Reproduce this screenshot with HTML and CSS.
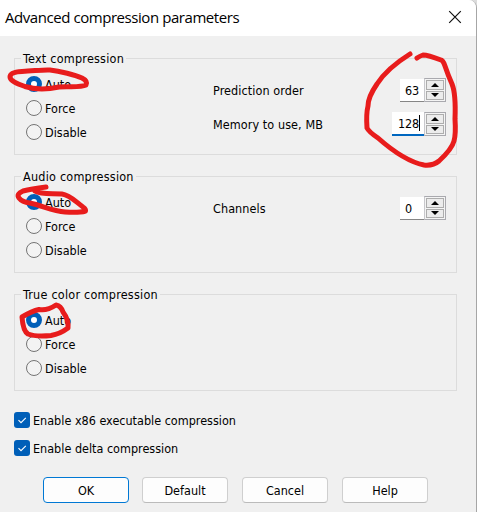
FILE: index.html
```html
<!DOCTYPE html>
<html lang="en">
<head>
<meta charset="utf-8">
<title>Advanced compression parameters</title>
<link rel="stylesheet" href="styles.css">
</head>
<body>
<main class="dialog">
  <header class="titlebar">
    <h1>Advanced compression parameters</h1>
    <svg class="close" width="14" height="14" viewBox="0 0 14 14"><path d="M1.2 1.2 12.8 12.8M12.8 1.2 1.2 12.8"/></svg>
  </header>
  <div class="content">
    <fieldset class="group">
      <legend>Text compression</legend>
      <div class="columns">
        <div class="radios">
          <div class="radio"><i class="dot on"></i><span>Auto</span></div>
          <div class="radio"><i class="dot"></i><span>Force</span></div>
          <div class="radio"><i class="dot"></i><span>Disable</span></div>
        </div>
        <div class="fields">
          <div class="field"><span>Prediction order</span>
            <div class="spin"><span class="value">63</span><span class="arrows"><b><svg width="8" height="4"><path d="M0 4 4 0 8 4z"/></svg></b><b><svg width="8" height="4"><path d="M0 0 4 4 8 0z"/></svg></b></span></div></div>
          <div class="field"><span>Memory to use, MB</span>
            <div class="spin"><span class="value focus">128<i class="caret"></i></span><span class="arrows"><b><svg width="8" height="4"><path d="M0 4 4 0 8 4z"/></svg></b><b><svg width="8" height="4"><path d="M0 0 4 4 8 0z"/></svg></b></span></div></div>
        </div>
      </div>
    </fieldset>
    <fieldset class="group">
      <legend>Audio compression</legend>
      <div class="columns">
        <div class="radios">
          <div class="radio"><i class="dot on"></i><span>Auto</span></div>
          <div class="radio"><i class="dot"></i><span>Force</span></div>
          <div class="radio"><i class="dot"></i><span>Disable</span></div>
        </div>
        <div class="fields">
          <div class="field"><span>Channels</span>
            <div class="spin"><span class="value">0</span><span class="arrows"><b><svg width="8" height="4"><path d="M0 4 4 0 8 4z"/></svg></b><b><svg width="8" height="4"><path d="M0 0 4 4 8 0z"/></svg></b></span></div></div>
        </div>
      </div>
    </fieldset>
    <fieldset class="group">
      <legend>True color compression</legend>
      <div class="columns">
        <div class="radios">
          <div class="radio"><i class="dot on"></i><span>Auto</span></div>
          <div class="radio"><i class="dot"></i><span>Force</span></div>
          <div class="radio"><i class="dot"></i><span>Disable</span></div>
        </div>
      </div>
    </fieldset>
    <div class="checks">
      <div class="check"><svg width="16" height="16"><rect width="16" height="16" rx="3"/><path d="M4.5 8.2 7 10.7 11.8 5.8"/></svg><span>Enable x86 executable compression</span></div>
      <div class="check"><svg width="16" height="16"><rect width="16" height="16" rx="3"/><path d="M4.5 8.2 7 10.7 11.8 5.8"/></svg><span>Enable delta compression</span></div>
    </div>
    <footer class="buttons">
      <button class="primary">OK</button><button>Default</button><button>Cancel</button><button>Help</button>
    </footer>
  </div>
  <svg class="ink" width="477" height="512" viewBox="0 0 477 512">
    <path d="M25 86.500C18 84 10 81 10 77Q10 72 22 71.500C34 71 43 69.500 50 70C60 71 75 75 82 78Q88 81 86 85C80 88 67 86 59 87C50 89 36 90 25 86.500Z"/>
    <path d="M46 187Q31 189 23 191Q16 194 19 198Q22 202 30 203C43 206 53 211 65 212Q79 213 85.500 211Q86 209 83 207C76 202 70 195 62 194C53 193 42 195 35 191"/>
    <path d="M22 317Q32 311 39 309.500Q47 311 56 305Q61 306 63 312Q69 320 68 328Q60 334 51 335.500Q36 337 28 334Q23 331 22 317Z"/>
    <path d="M410 54C394 64 384 73 377 84Q368 97 368 106Q366 114 367 128Q369 132 378 138Q404 161 424 165Q433 166 439 161Q452 149 454 141Q456 134 455 119Q456 94 452 84Q448 75 445 66Q443 60 441 60Q428 55 423 55Q420 56 417 58"/>
  </svg>
</main>
</body>
</html>
```
FILE: styles.css
```css
* { box-sizing: border-box; }
body {
  margin: 0;
  background: #dcdcdc;
  color: #000;
  font: 12.5px/16px "DejaVu Sans Condensed", "DejaVu Sans", sans-serif;
  font-stretch: condensed;
}
.dialog {
  position: relative;
  width: 477px;
  height: 512px;
  overflow: hidden;
  background: #f0f0f0;
  border-right: 1px solid #a6a6a6;
  border-top-right-radius: 8px;
}
.titlebar {
  display: flex;
  justify-content: space-between;
  height: 36px;
  padding: 10px 14px 0 5px;
  background: #fff;
}
h1 {
  margin: -3px 0 0;
  font: 400 15px/20px "Open Sans", "Noto Sans", sans-serif;
  letter-spacing: -0.44px;
}
.close { fill: none; stroke: #111; stroke-width: 1.2; }
.content { padding: 14px 19px 0 14px; }
.group {
  height: 105px;
  min-width: 0;
  margin: 0 0 13px;
  padding: 0;
  border: 1px solid #dcdcdc;
}
legend {
  height: 17px;
  margin-left: 6px;
  padding: 0 2px;
  line-height: 18px;
  letter-spacing: 0.23px;
}
.columns { display: grid; grid-template-columns: 187px 1fr; padding: 5px 10px 0 11px; }
.fields { padding-top: 1px; }
.radio { display: flex; align-items: center; gap: 3px; height: 24px; }
.dot { width: 16px; height: 16px; border: 1px solid #747474; border-radius: 50%; background: #f3f3f3; }
.dot.on { border: 5px solid #005fb8; background: #fff; }
.field { display: flex; align-items: center; justify-content: space-between; height: 34px; }
.field > span { padding-top: 2px; letter-spacing: 0.08px; }
.radio span { padding-top: 1px; }
.spin { display: flex; align-items: center; height: 24px; }
.value {
  width: 24px;
  height: 23px;
  padding: 0 5px;
  background: #fff;
  border-bottom: 1px solid #868686;
  line-height: 23px;
  letter-spacing: -0.2px;
}
.value.focus { display: flex; width: 32px; height: 24px; padding-left: 6px; border-bottom: 2px solid #0067c0; line-height: 24px; }
.caret { width: 1px; height: 16px; margin: 3px 0 0; background: #000; }
.arrows { display: grid; gap: 1px; width: 22px; height: 24px; padding: 1px; background: #f4f4f4; border: 1px solid #a9a9ae; border-left-color: #c8c8cc; }
.arrows b { display: flex; align-items: center; justify-content: center; border: 1px solid #adadad; background: #ececec; }
.arrows svg { display: block; }
.checks { display: grid; gap: 12px; padding-top: 8px; }
.check { display: flex; gap: 3px; height: 16px; line-height: 18px; }
.check rect { fill: #005fb8; }
.check path { fill: none; stroke: #fff; stroke-width: 1.1; }
.buttons { display: flex; gap: 14px; margin: 21px 0 0 29px; }
button { width: 86px; height: 26px; padding: 1px 0 0; color: #000; font: inherit; background: #fdfdfd; border: 1px solid #cfcfcf; border-bottom-color: #bbb; border-radius: 4px; }
.primary { margin-right: -1px; border-color: #0078d4; }
.ink { position: absolute; left: 0; top: 0; fill: none; stroke: #e81c1c; stroke-width: 5; stroke-linecap: round; stroke-linejoin: round; }
```
